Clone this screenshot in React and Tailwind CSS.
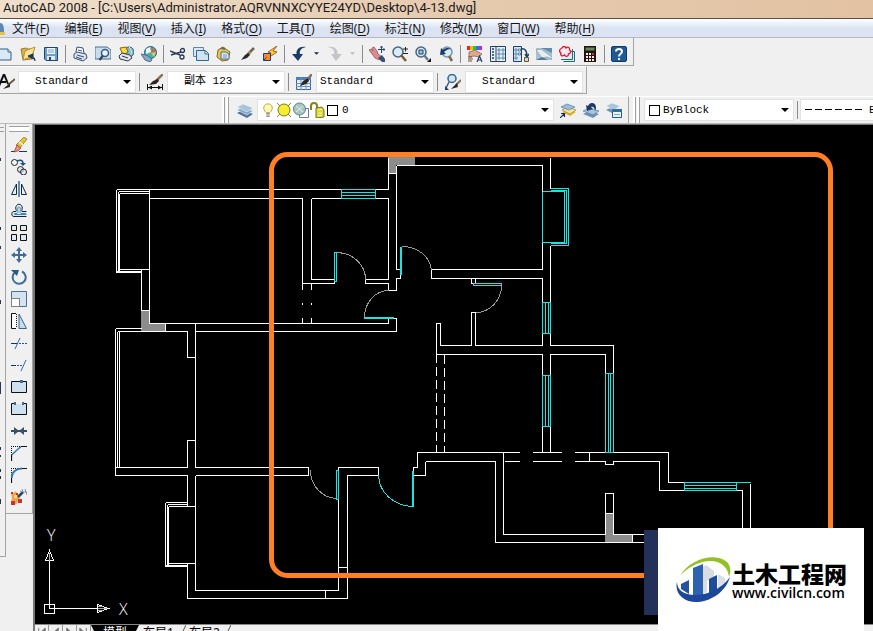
const ICONS = {
  blank: (
    <>
      <path d="M0 3h11l3 3v8H0z" fill="#d9e9f5" stroke="#2f5f8a" />
      <path d="M11 3v3h3" fill="#fff" stroke="#2f5f8a" />
    </>
  ),
  open: (
    <>
      <path d="M1 3l5-1 2 1h6l-2 10-9 1z" fill="#d9b04a" stroke="#8a6a18" strokeWidth=".8" />
      <path d="M5 5l10-4-3 9-9 4z" fill="#f8e59a" stroke="#a8842a" strokeWidth=".8" />
      <path d="M15 15c0-3-1-4-4-5M8 10l5-2v5z" fill="#1c3558" stroke="#1c3558" />
    </>
  ),
  save: (
    <>
      <path d="M1.500 1.500h13v13H3l-1.500-1.500z" fill="#6c9fcb" stroke="#1f4470" />
      <path d="M4 2h8v6H4z" fill="#eef5fb" />
      <path d="M5 4h6M5 6h6" stroke="#7da3c6" />
      <path d="M4 10h8v4H4z" fill="#dfe9f2" />
      <path d="M6 11h2v3H6z" fill="#1f4470" />
    </>
  ),
  print: (
    <>
      <path d="M4 6l1-5 6 1 1 5" fill="#fff" stroke="#37507a" />
      <path d="M2 8l3-2 9 2 1 4-4 3-9-3z" fill="#dfe3ee" stroke="#37507a" />
      <path d="M5 9l7 2M4 11l6 2M6 4l4 1" stroke="#37507a" />
    </>
  ),
  preview: (
    <>
      <path d="M0 1h12l4 3v9H0z" fill="#c9dced" stroke="#4a6f94" />
      <circle cx="10" cy="7" r="3.500" fill="#e8f6ff" stroke="#35597f" strokeWidth="1.500" />
      <path d="M8 9.500L4.500 14" stroke="#27456b" strokeWidth="2.200" />
    </>
  ),
  publish: (
    <>
      <circle cx="11" cy="6" r="5" fill="#7fb6cf" stroke="#32627c" />
      <path d="M11 1c3 3 3 7 0 10" fill="none" stroke="#e8f6e0" />
      <path d="M2 2l6-1 2 5-5 3z" fill="#f8d840" stroke="#8b6a10" />
      <path d="M1 10l3-3 8 2 2 3-4 3-8-2z" fill="#e2e5ea" stroke="#303a4c" />
      <path d="M4 10l6 2" stroke="#303a4c" />
    </>
  ),
  globe: (
    <>
      <circle cx="9.500" cy="6.500" r="6" fill="#3bb5b0" stroke="#2c5f80" />
      <path d="M5 3l4-2 1 5-5 2z" fill="#f4f4f4" />
      <path d="M10 1l5 4-4 2z" fill="#e25b4a" />
      <path d="M10 7l5-1-2 5z" fill="#f0c63c" />
      <path d="M0 8l5 1 4 2 2 3-2 2-5-2z" fill="#8ba7c0" stroke="#4f6d88" />
    </>
  ),
  cut: (
    <>
      <path d="M0 5l10 4M1 9l10-3" stroke="#2b3b55" strokeWidth="1.500" />
      <circle cx="12.500" cy="4.500" r="2" fill="none" stroke="#2b3b55" strokeWidth="1.300" />
      <circle cx="12" cy="11" r="2" fill="none" stroke="#2b3b55" strokeWidth="1.300" />
    </>
  ),
  copy: (
    <>
      <path d="M.5 1.500h10v9H.5z" fill="#dbe8f3" stroke="#5d87ab" />
      <path d="M3.500 4.500h9l3 3v7h-12z" fill="#cfe3f1" stroke="#31668f" />
      <path d="M12 5v3h3" fill="#fff" stroke="#31668f" />
    </>
  ),
  paste: (
    <>
      <path d="M2 4l5-3 7 5-2 8-6 1-5-4z" fill="#e8c84a" stroke="#80671a" />
      <path d="M5 6h5l3 2v5H5z" fill="#dbe8f3" stroke="#476f94" />
      <path d="M5 2l4 1" stroke="#6b6b6b" strokeWidth="2" />
      <path d="M7 9h4M7 11h4" stroke="#7396b4" />
    </>
  ),
  brush: (
    <>
      <path d="M15 2L9 8" stroke="#6f675b" strokeWidth="2.500" />
      <path d="M9 7L6 9l-4 5 6-2 3-3z" fill="#2c2522" />
      <path d="M10 6l2 2" stroke="#c7a23f" strokeWidth="1.500" />
    </>
  ),
  block: (
    <>
      <path d="M15 0L6 6l3 1-3 5 9-6-4-1z" fill="#ffd21f" stroke="#8f3b12" strokeWidth=".8" />
      <path d="M1.500 7.500h7v7h-7z" fill="#f58a2b" stroke="#1f3f74" />
      <path d="M1.500 14.500l3-3" stroke="#1f3f74" />
    </>
  ),
  undo: <path d="M15 1C8 0 5 4 5.500 8H1l6 7 5-7H9c-1-3 1-6 6-7z" fill="#1d3a66" />,
  redo: <path d="M1 1c7-1 10 3 9.500 7H15l-6 7-5-7h3c1-3-1-6-6-7z" fill="#c3c5c8" />,
  pan: (
    <>
      <path d="M0 4l2-1 2 2-1-3 2-1 3 4 1 3 4 3-3 3-4-2z" fill="#d98c8c" stroke="#8f5a66" strokeWidth=".8" />
      <path d="M9 12l4-3 3 4v3h-3z" fill="#3a4f75" />
      <path d="M12.500 0v7M9 3.500h7M11.500 1.500l1-1.500 1 1.500M14.500 2.500l1.500 1-1.500 1" stroke="#26436f" fill="none" />
    </>
  ),
  zoomRt: (
    <>
      <circle cx="6" cy="6" r="5" fill="#d7ecf7" stroke="#49657f" strokeWidth="1.500" />
      <path d="M9 9l5 6" stroke="#7a5c33" strokeWidth="2.500" />
      <path d="M11 3h5M13.500 1v4.500M11 7.500h5" stroke="#222" />
    </>
  ),
  zoomWin: (
    <>
      <circle cx="6" cy="6" r="5" fill="#d7ecf7" stroke="#49657f" strokeWidth="1.500" />
      <path d="M4 4h4v4H4z" fill="#9fc3dc" stroke="#1f3f66" />
      <path d="M9 9l4 5" stroke="#6b7b8c" strokeWidth="2.500" />
      <path d="M16 12v4h-4z" fill="#111" />
    </>
  ),
  zoomPrev: (
    <>
      <circle cx="9" cy="6" r="5" fill="#d7ecf7" stroke="#7c93a8" strokeWidth="1.500" />
      <path d="M13 3C9 1 7 2 5 4L3 2 2 9l6-1-2-2c2-2 4-3 7-3z" fill="#1d3a66" />
      <path d="M11 10l3 5" stroke="#7a6a50" strokeWidth="2.500" />
    </>
  ),
  props: (
    <>
      <path d="M0 0h3v4H0z" fill="#e22" />
      <path d="M3 0h3v4H3z" fill="#fb0" />
      <path d="M6 0h3v4H6z" fill="#2c3" />
      <path d="M9 0h3v4H9z" fill="#27e" />
      <path d="M12 0h3v4h-3z" fill="#c2d" />
      <path d="M2 6l6-2 7 4-3 3-5-1-5 1z" fill="#e3a58f" stroke="#8a5348" strokeWidth=".7" />
      <path d="M1 11h4M1 13h5M1 15h4" stroke="#6b4a3f" />
      <path d="M10 16l2.500-6 2.500 6M11 14h3" fill="none" stroke="#1f3f66" strokeWidth="1.200" />
    </>
  ),
  dcenter: (
    <>
      <path d="M.5.5h15v15H.5z" fill="#e8f1f8" stroke="#1f4066" />
      <path d="M6 1v14" stroke="#1f4066" />
      <path d="M2 3h2M2 6h2M2 9h2M2 12h2" stroke="#1f4066" strokeWidth="1.500" />
      <path d="M8 3h2v2H8zM12 3h2v2h-2zM8 7h2v2H8zM12 7h2v2h-2zM8 11h2v2H8zM12 11h2v2h-2z" fill="#fff" stroke="#3e6c97" strokeWidth=".8" />
    </>
  ),
  palettes: (
    <>
      <path d="M.5.5h8v15h-8z" fill="#d6e6f3" stroke="#1f4066" />
      <path d="M2 3h2v2H2zM5.500 3h2v2h-2zM2 7h2v2H2zM5.500 7h2v2h-2zM2 11h2v2H2z" fill="#fff" stroke="#3e6c97" strokeWidth=".8" />
      <path d="M8 3c4-1 6 2 6 7M12 8l2 3 2-3" fill="none" stroke="#1f4066" strokeWidth="1.500" />
      <path d="M11.500 11.500h4v4h-4z" fill="#e6d9a6" stroke="#555" />
    </>
  ),
  sheets: (
    <>
      <path d="M0 2h16v12H0z" fill="#a9c1ce" />
      <path d="M5 2h11v5z" fill="#5f8dab" />
      <path d="M0 4l5-1 11 8v2l-5-2-5 1z" fill="#e6edf0" stroke="#8ba1ae" strokeWidth=".8" />
      <path d="M0 14l6-3 6 3z" fill="#54799a" />
    </>
  ),
  markup: (
    <>
      <path d="M5.500 5.500h10v10h-11" fill="#dfe9ef" stroke="#1d6e72" />
      <path d="M13.500 3v10.500H2" fill="none" stroke="#1d6e72" />
      <path d="M3 2c1-2 3-2 4 0 2-2 4 0 3.500 2 2 1 1 4-1 4 0 3-3 3-4 1C3 11 1 9 2 7 0 6 0 3 3 2z" fill="#ffe9ee" stroke="#e0122f" strokeWidth="1.300" />
    </>
  ),
  calc: (
    <>
      <path d="M2 0h12v16H2z" fill="#24140f" />
      <path d="M3.500 1.500h9v3h-9z" fill="#5f8d5c" />
      <path d="M4 7h2v2H4zM7 7h2v2H7zM10 7h2v2h-2zM4 10h2v2H4zM7 10h2v2H7zM10 10h2v2h-2zM4 13h2v2H4zM7 13h2v2H7zM10 13h2v2h-2z" fill="#f5ecec" />
      <path d="M10 7h2v2h-2z" fill="#c63a3a" />
    </>
  ),
  help: (
    <>
      <rect x=".5" y=".5" width="15" height="15" rx="1.500" fill="#1f5a96" stroke="#123a66" />
      <path d="M5 5.500C5 2 11 2 11 5.500 11 8 8 7.500 8 10.500M8 12v2" fill="none" stroke="#fff" strokeWidth="2" />
    </>
  ),
  textStyle: (
    <>
      <path d="M0 12L5 0l4 10M2 8h5" fill="none" stroke="#111" strokeWidth="2" />
      <path d="M16 5L9 11" stroke="#6b5a44" strokeWidth="2" />
      <path d="M11 9l-7 6 7-2z" fill="#2c2522" />
    </>
  ),
  dimStyle: (
    <>
      <path d="M16 0L9 7" stroke="#807563" strokeWidth="2.500" />
      <path d="M11 5L6 7l-4 4 7-1 3-3z" fill="#2c2522" />
      <path d="M.5 10v6M15.500 10v6M1 13.500h14" stroke="#111" />
      <path d="M1 13.500l4-2v4zM15 13.500l-4-2v4z" fill="#111" />
    </>
  ),
  tableStyle: (
    <>
      <path d="M.5 3.500h14v12H.5z" fill="#e6f0fa" stroke="#3a6296" />
      <path d="M0 3h15v3H0z" fill="#4a7fc0" />
      <path d="M0 9.500h15M0 12.500h15M5 4v12M10 4v12" stroke="#6b93c4" />
      <path d="M16 0l-5 6" stroke="#807563" strokeWidth="2.500" />
      <path d="M12 4L7 7l-3 5 6-2 3-3z" fill="#2c2522" />
    </>
  ),
  leaderStyle: (
    <>
      <circle cx="7" cy="4.500" r="4" fill="#cfe6f7" stroke="#35618e" strokeWidth="1.500" />
      <path d="M4 8l-3 6" stroke="#35618e" strokeWidth="1.500" />
      <path d="M0 12v4h4z" fill="#1f3f66" />
      <path d="M16 6l-5 5" stroke="#807563" strokeWidth="2" />
      <path d="M12 9l-6 6 7-2z" fill="#2c2522" />
    </>
  ),
  layers: (
    <>
      <path d="M0 11l6-3 10 4-6 4z" fill="#4f7396" />
      <path d="M0 8l6-3 10 4-6 4z" fill="#86a8c6" stroke="#e9f1f8" strokeWidth=".6" />
      <path d="M0 5l6-3 10 4-6 4z" fill="#a8c3da" stroke="#e9f1f8" strokeWidth=".6" />
    </>
  ),
  bulb: (
    <>
      <path d="M6 11C1 7 3 1 8 1s7 6 2 10z" fill="#fff8b8" stroke="#b99a28" />
      <path d="M6 12.500h4M6 15h4" stroke="#777" strokeWidth="1.500" />
    </>
  ),
  sun: (
    <>
      <path d="M1 1l3 3M15 1l-3 3M1 15l3-3M15 15l-3-3" stroke="#8a8620" />
      <circle cx="8" cy="8" r="6" fill="#f5ee2e" stroke="#7b7a24" />
    </>
  ),
  vpFreeze: (
    <>
      <path d="M6.500 6.500h9v9h-9z" fill="#fff" stroke="#6a7f94" />
      <circle cx="6.500" cy="7" r="6" fill="#a9c6c2" stroke="#5f7f8c" />
      <path d="M3 4l7 6M10 4l-7 6" stroke="#dfeceb" />
    </>
  ),
  lock: (
    <>
      <path d="M1 8V4c0-4 6-4 6 0v3" fill="none" stroke="#84831c" strokeWidth="2" />
      <path d="M6 6l6-1 2 3v7l-8 1z" fill="#d8da3a" stroke="#73731a" />
      <path d="M8 8l4-.5M8 11h4M8 13.500h4" stroke="#f7f7a8" />
    </>
  ),
  layerCurrent: (
    <>
      <path d="M2 10l6-3 8 3-6 4z" fill="#e3b62c" />
      <path d="M2 8l6-3 8 3-6 4z" fill="#f7e59b" stroke="#8e7a2f" strokeWidth=".6" />
      <path d="M1 5l6-3 8 3-6 3z" fill="#9dbcd8" stroke="#48729b" strokeWidth=".6" />
      <path d="M0 16l4-4M1 11.500h3.500V15" fill="none" stroke="#16305b" strokeWidth="1.200" />
    </>
  ),
  layerPrev: (
    <>
      <path d="M0 12l6-3 10 3-6 4z" fill="#6e93b5" />
      <path d="M0 9l6-3 10 3-6 4z" fill="#a8c3da" stroke="#48729b" strokeWidth=".6" />
      <path d="M12 9c2-3 1-8-3-8-2 0-3 1-4 3L3 3l1 6 6-2-2-2c2-1 4 1 4 4z" fill="#1d3a66" />
    </>
  ),
  layerStates: (
    <>
      <path d="M0 8l6-3 8 3-6 4z" fill="#6e93b5" />
      <path d="M0 4l6-3 8 3-6 4z" fill="#a8c3da" stroke="#e9f1f8" strokeWidth=".6" />
      <path d="M6.500 7.500h9v8h-9z" fill="#eaf5fc" stroke="#1f5a8f" />
      <path d="M6 7h10v3H6z" fill="#2970ab" />
      <path d="M8 12.500h6" stroke="#7ea3c0" />
    </>
  ),
  erase: (
    <>
      <path d="M0 14.500h4M8 14.500h8" stroke="#1c3558" />
      <path d="M13 0l3 2-7 9-4-3z" fill="#e6c52f" stroke="#6f5c12" strokeWidth=".6" />
      <path d="M8 5l4 3" stroke="#eee" strokeWidth="1.500" />
      <path d="M6 8l4 3-3 3-4 1z" fill="#e98b80" stroke="#7c2e25" strokeWidth=".6" />
    </>
  ),
  copyObj: (
    <>
      <circle cx="3.500" cy="3.500" r="3" fill="#f4f7fa" stroke="#222" />
      <circle cx="9.500" cy="10.500" r="3" fill="#dfe7ee" stroke="#222" />
      <circle cx="12.500" cy="13" r="3" fill="#dfe7ee" stroke="#222" fillOpacity=".6" />
      <path d="M6 2c4-2 6 0 6 2" fill="none" stroke="#1f4f80" strokeWidth="1.500" />
      <path d="M9 4h6l-3 3z" fill="#1f4f80" />
    </>
  ),
  mirror: (
    <>
      <path d="M8 0v16" stroke="#2b6ca8" strokeWidth="1.500" />
      <path d="M5.500 3v10.500H.5zM10.500 3v10.500h5z" fill="#e7eef4" stroke="#1b2733" />
    </>
  ),
  offset: (
    <>
      <path d="M15.500 13.500H3c-3 0-3-5 0-5h2c1-1-1-3 0-5 1-3 5-3 6 0 1 2-1 4 0 5h4.500" fill="#e3ecf3" stroke="#17222e" />
      <path d="M15.500 11.500H4c-1 0-1-1 0-1h2c2-1 0-4 1-6 .5-1 1.500-1 2 0 1 2-1 5 1 6h5" fill="none" stroke="#3c86c8" />
    </>
  ),
  array: <path d="M.5.5h5v5h-5zM9.500.5h6v5h-6zM.5 9.500h5v6h-5zM9.500 9.500h6v6h-6z" fill="#dbe9f0" stroke="#111" />,
  move: <path d="M8 0l3 4H9v3h3V5l4 3-4 3V9H9v3h2l-3 4-3-4h2V9H4v2L0 8l4-3v2h3V4H5z" fill="#426b96" />,
  rotate: (
    <>
      <path d="M11 2.500a6.500 6.500 0 1 1-6.500.5" fill="none" stroke="#426b96" strokeWidth="2" />
      <path d="M0 1h8l-2 6z" fill="#2e5884" />
    </>
  ),
  scale: (
    <>
      <path d="M.5 6V.5h15v15H9z" fill="#d5e3f1" />
      <path d="M.5 7V.5h15v15H9" stroke="#44719b" />
      <path d="M.5 7.500h8v8h-8z" fill="#fff" stroke="#111" strokeDasharray="1 1" />
    </>
  ),
  stretch: (
    <>
      <path d="M5 .5H.5v15H5" fill="#fff" stroke="#111" />
      <path d="M5.500 1v14" stroke="#111" strokeDasharray="1 1" />
      <path d="M8 1l7.500 14.500H8z" fill="#c9daec" stroke="#3c6690" />
    </>
  ),
  trim: (
    <>
      <path d="M0 8.500h6" stroke="#17314f" />
      <path d="M8 8.500h8" stroke="#1f5a94" strokeDasharray="2 1" />
      <path d="M9 3L4 14" stroke="#2b6ca8" />
    </>
  ),
  extend: (
    <>
      <path d="M0 8.500h5" stroke="#17314f" />
      <path d="M6 8.500h6" stroke="#1f5a94" strokeDasharray="2 1" />
      <path d="M15 3l-5 11" stroke="#2b6ca8" />
    </>
  ),
  breakPt: (
    <>
      <path d="M.5 2.500h15v11H.5z" fill="#cfe0ee" stroke="#111" />
      <path d="M9 1h3v3H9z" fill="#426b96" />
    </>
  ),
  breakObj: (
    <>
      <path d="M1 3h14v10H1z" fill="#cfe0ee" />
      <path d="M3 2.500H.5v11h15v-11H13" fill="none" stroke="#111" />
      <path d="M3 1h2v3H3zM11 1h2v3h-2z" fill="#426b96" />
    </>
  ),
  join: (
    <>
      <path d="M0 8h16" stroke="#111" strokeWidth="1.500" />
      <path d="M3 4l5 4-5 4zM13 4L8 8l5 4z" fill="#35536f" />
    </>
  ),
  chamfer: (
    <>
      <path d="M10 1.500h6M.5 10v6" stroke="#111" strokeWidth="1.200" />
      <path d="M0 1.500h10M.5 1v9" stroke="#111" strokeDasharray="1 1" />
      <path d="M.5 10L10 1.500" stroke="#3577b5" strokeWidth="1.500" />
    </>
  ),
  fillet: (
    <>
      <path d="M10 1.500h6M.5 10v6" stroke="#111" strokeWidth="1.200" />
      <path d="M0 1.500h10M.5 1v9" stroke="#111" strokeDasharray="1 1" />
      <path d="M.5 11C1 5 5 1.500 11 1.500" fill="none" stroke="#3577b5" strokeWidth="2" />
    </>
  ),
  explode: (
    <>
      <path d="M0 3l3 1 2-2 1 3 4 1-2 3 3 4-4-1-2 4-2-3-3 1 1-5z" fill="#f0a050" />
      <path d="M3 6h3v3H3z" fill="#f9e04a" />
      <path d="M0 12h4v4H0zM7 10h4v4H7zM0 3h2v2H0zM5 4h2v2H5z" fill="#c0392b" />
      <path d="M7 8l5-5" stroke="#2d4468" strokeWidth="2.500" />
      <path d="M11 0l1 3h4M14 0l2 6M9 2l2 1" stroke="#7d97b3" fill="none" />
    </>
  ),
};

// '|' is a separator, 'v' a small drop-down arrow
const STANDARD = [
  ['blank', '新建'], ['open', '打开'], ['save', '保存'], '|',
  ['print', '打印'], ['preview', '打印预览'], ['publish', '发布'], ['globe', '三维 DWF'], '|',
  ['cut', '剪切'], ['copy', '复制'], ['paste', '粘贴'], ['brush', '特性匹配'], ['block', '块编辑器'], '|',
  ['undo', '放弃'], 'v', ['redo', '重做'], 'v', '|',
  ['pan', '实时平移'], ['zoomRt', '实时缩放'], ['zoomWin', '窗口缩放'], ['zoomPrev', '缩放上一个'], '|',
  ['props', '特性'], ['dcenter', '设计中心'], ['palettes', '工具选项板'], ['sheets', '图纸集管理器'], ['markup', '标记集管理器'], ['calc', '快速计算器'], '|',
  ['help', '帮助'],
];

const MODIFY = [
  ['erase', '删除'], ['copyObj', '复制对象'], ['mirror', '镜像'], ['offset', '偏移'], ['array', '阵列'],
  ['move', '移动'], ['rotate', '旋转'], ['scale', '缩放'], ['stretch', '拉伸'], ['trim', '修剪'],
  ['extend', '延伸'], ['breakPt', '打断于点'], ['breakObj', '打断'], ['join', '合并'],
  ['chamfer', '倒角'], ['fillet', '圆角'], ['explode', '分解'],
];

const MENUS = [
  ['文件', 'F'], ['编辑', 'E'], ['视图', 'V'], ['插入', 'I'], ['格式', 'O'], ['工具', 'T'],
  ['绘图', 'D'], ['标注', 'N'], ['修改', 'M'], ['窗口', 'W'], ['帮助', 'H'],
];

function Icon({ name, className = 'size-4' }) {
  return (
    <svg viewBox="0 0 16 16" fill="none" className={`${className} shrink-0`} aria-hidden="true">
      {ICONS[name]}
    </svg>
  );
}

function Tool({ name, label, className = 'h-[22px] w-[23px]' }) {
  return (
    <button type="button" aria-label={label} className={`${className} flex shrink-0 items-center justify-center`}>
      <Icon name={name} />
    </button>
  );
}

function Separator() {
  return (
    <div className="flex w-[6px] shrink-0 justify-center">
      <div className="h-[18px] w-px bg-[#8c8c8c]" />
    </div>
  );
}

function Caret({ className = 'h-1 w-2' }) {
  return (
    <svg viewBox="0 0 8 4" className={className} aria-hidden="true">
      <path d="M0 0h8L4 4z" fill="currentColor" />
    </svg>
  );
}

function Grip() {
  return (
    <div className="flex shrink-0 gap-px self-stretch">
      <div className="w-[3px] border-r border-[#a0a0a0] bg-white" />
      <div className="w-[3px] border-r border-[#a0a0a0] bg-white" />
    </div>
  );
}

function Combo({ label, value, before, className, pad = 'pl-1' }) {
  return (
    <div className={`${className} relative flex h-[22px] shrink-0 items-center border border-[#e2e2e2] bg-white`}>
      {before}
      <select
        aria-label={label}
        defaultValue={value}
        className={`${pad} h-full w-full min-w-0 flex-1 appearance-none bg-transparent font-['Liberation_Mono','Noto_Sans_CJK_SC',monospace] text-[11px] text-black outline-none`}
      >
        <option>{value}</option>
      </select>
      <Caret className="pointer-events-none absolute right-1 h-1 w-2" />
    </div>
  );
}

function Header() {
  return (
    <header>
      <h1 className="h-[18px] overflow-hidden bg-linear-to-r from-[#f0dfcc] via-[#e6cbb0] to-[#e2c2a2] pl-[3px] font-['Roboto',sans-serif] text-[13px] leading-[16px] whitespace-nowrap text-[#1a1a1a]">
        AutoCAD 2008 - [C:\Users\Administrator.AQRVNNXCYYE24YD\Desktop\4-13.dwg]
      </h1>
      <nav className="flex h-5 items-center gap-[15px] border-t border-b border-t-[#5c4f45] border-b-[#b4b8c4] bg-linear-to-b from-white via-[#dbe4f2] to-[#dde2f3] pt-px text-[12px] text-[#151515]">
        <svg viewBox="0 0 5 14" className="-mr-2 h-3.5 w-[5px]" aria-hidden="true">
          <path d="M0 1c3 0 4 3 4 9H0z" fill="#5c86b5" />
          <path d="M0 10h5v3H0z" fill="#e8c437" />
        </svg>
        {MENUS.map(([name, key]) => (
          <button type="button" key={key} className="shrink-0 whitespace-nowrap">
            {name}(<u className="underline-offset-2">{key}</u>)
          </button>
        ))}
      </nav>
    </header>
  );
}

function Toolbars() {
  return (
    <div>
      <div className="flex h-7 w-fit items-center border-r border-b border-[#a5a5a5] pt-[5px] pr-[3px]">
        <div className="-ml-[7px] flex items-center">
          {STANDARD.map((item, i) => {
            if (item === '|') return <Separator key={i} />;
            if (item === 'v') {
              return (
                <button type="button" key={i} aria-label="更多" className="flex h-[22px] w-[13px] items-center justify-center pb-px text-[#1c2a55] nth-[19]:text-[#bbb]">
                  <Caret className="h-[3px] w-[5px]" />
                </button>
              );
            }
            return <Tool key={i} name={item[0]} label={item[1]} />;
          })}
        </div>
      </div>

      <div className="flex h-7 w-fit items-center border-t border-r border-b border-t-white border-r-[#a5a5a5] border-b-[#a5a5a5] pt-[3px] pr-[3px]">
        <Tool name="textStyle" label="文字样式" className="-ml-1 h-[22px] w-[22px]" />
        <Combo label="文字样式" value="Standard" className="w-[118px]" pad="pl-4" />
        <Separator />
        <Tool name="dimStyle" label="标注样式" className="h-[22px] w-[25px]" />
        <Combo label="标注样式" value="副本 123" className="w-[118px]" pad="pl-4" />
        <Separator />
        <Tool name="tableStyle" label="表格样式" className="h-[22px] w-[25px]" />
        <Combo label="表格样式" value="Standard" className="w-[118px]" pad="pl-[3px]" />
        <Separator />
        <Tool name="leaderStyle" label="多重引线样式" className="h-[22px] w-[25px]" />
        <Combo label="多重引线样式" value="Standard" className="w-[118px]" pad="pl-4" />
      </div>

      <div className="flex h-[30px] items-end overflow-hidden border-b border-[#b8b8b8]">
        <div className="ml-[222px] flex h-[27px] shrink-0 items-center border-t border-r border-t-white border-r-[#a5a5a5] pr-[3px]">
          <Grip />
          <Tool name="layers" label="图层特性管理器" className="ml-1 h-[22px] w-6" />
          <Combo
            label="图层"
            value="0"
            className="w-[297px]"
            pad="pl-1"
            before={
              <div className="flex items-center gap-px pl-[3px]">
                <Icon name="bulb" className="size-3.5" />
                <Icon name="sun" className="size-4" />
                <Icon name="vpFreeze" className="size-4" />
                <Icon name="lock" className="size-4" />
                <span className="size-[11px] border border-black bg-white" />
              </div>
            }
          />
          <Tool name="layerCurrent" label="置为当前" className="ml-0.5 h-[22px] w-[23px]" />
          <Tool name="layerPrev" label="上一个图层" />
          <Tool name="layerStates" label="图层状态管理器" />
        </div>
        <div className="ml-1 flex h-[27px] shrink-0 items-center border-t border-white">
          <Grip />
          <Combo
            label="颜色"
            value="ByBlock"
            className="ml-1 w-[150px]"
            pad="pl-[3px]"
            before={<span className="ml-1 size-[11px] shrink-0 border border-black bg-white" />}
          />
          <Separator />
          <Combo
            label="线型"
            value="ByBlock"
            className="w-[150px]"
            pad="pl-1.5"
            before={
              <svg viewBox="0 0 58 2" className="ml-1 h-0.5 w-[58px] shrink-0" aria-hidden="true">
                <path d="M0 .5h58" stroke="#000" strokeDasharray="7 3" />
              </svg>
            }
          />
        </div>
      </div>
    </div>
  );
}

const WALLS = [
  // upper left bay and room
  'M116 189H388M118 191H149M119 193H149M116 189V272M118 191V271M119 193V270M119 269H149M116 271H141M116 272H141M141 269V310',
  'M149 189V323M149 198H302M311 198H388M302 198V283M311 198V279M311 279H334V283H302M141 310H149M149 323H388M165 323V331',
  'M302 283V289M311 283V289M302 302V304M311 302V304M302 317V323M311 317V323',
  // middle hall
  'M365 279H388M365 279V283H388V290H396V278H400V269H396V165M388 157V189M388 198V279M388 173H396M388 323V318H396V331H195',
  // living room and lower left balcony
  'M187 357H195V467M195 323V357M187 331V357M187 467V440H195M115 328H141M117 331H187M115 328V475M117 331V467M119 331V467',
  'M115 467H187M115 475H187M195 467H308V475H195M187 475V502M187 506H195M195 475V590H338V467H378V475H347V598H187V563',
  'M165 502H187V506M167 504H187M168 506H195M165 502V566M167 504V565M168 506V564M168 563H195M165 565H187M165 566H187M338 567H347M325 590V598',
  // top right room
  'M396 165H542V191M550 157V188M542 242V269H431V278H542V345H475V312H471V345H440V323H436V354H542V452M550 245V345H613V373M605 373V354H550V452',
  'M471 278V283H475V278',
  // lower right rooms
  'M412 467H417V452H519M425 461V475H413V467M425 461H495V542H658M503 452V534H605V493H613V534H658M504 461H519M532 452H561M532 461H561',
  'M574 452H668V482H684M574 461H605V464H613V461H659V490H684M589 452V461M605 513H613M632 534V542M736 490H742V530M750 483V530',
];

const CYAN = [
  'M341 189H375V198H341zM341 192H375M341 195H375',
  'M334 252H336V281H334zM400 246V274M401 246V274M364 317H393V318H364z',
  'M542 191V242M542 191H564V242H542M550 190H566V243H550M550 188H568V245H550',
  'M473 283H501V285H473zM542 302H550V333H542zM545 302V333M548 302V333',
  'M542 375H550V426H542zM545 375V426M548 375V426M605 373H613V452H605zM608 373V452M610 373V452',
  'M336 470H338V499H336zM412 470V506M413 470V506M378 475A35 32 0 0 0 412 506',
  'M684 482H736V490H684zM684 485H736M684 488H736M736 482H750',
];

function FloorPlan() {
  return (
    <svg viewBox="35 125 838 499" preserveAspectRatio="xMinYMin meet" className="absolute inset-0 size-full" role="img" aria-label="4-13.dwg">
      <path d="M388 156h27v9h-19v9h-8zM141 310h9v13h16v9h-25zM605 513h9v21h18v9h-27z" fill="#8c8c8c" />
      <g transform="translate(.5 .5)" fill="none" shapeRendering="crispEdges">
        <path d={WALLS.join('')} stroke="#fff" />
        <path d="M436 353V452M444 354V452" stroke="#fff" strokeDasharray="9 4" />
        <path d={CYAN.join('')} stroke="#1ee3e3" />
        <path
          d="M336 252A29 27 0 0 1 365 279M402 246A29 26 0 0 1 431 270M388 290A24 27 0 0 0 364 317M501 285A26 27 0 0 1 475 312M310 470A27 28 0 0 0 336 498"
          stroke="#9a9a9a"
        />
        <path d="M44 604H54V613H44zM49 608V560M49 608H97M49 550L45 560H53zM108 608L97 604V612z" stroke="#fff" />
        <path d="M49 552V560M97 608H106M97 606H102M97 610H102" stroke="#aaa" />
      </g>
      <text x="47" y="541" fill="#fff" className="font-['Open_Sans',sans-serif] text-[16px] font-light">Y</text>
      <text x="119" y="615" fill="#fff" className="font-['Open_Sans',sans-serif] text-[16px] font-light">X</text>
      <rect x="271.500" y="154.500" width="559" height="421" rx="16" fill="none" stroke="#ff7f27" strokeWidth="5" />
    </svg>
  );
}

function LayoutTabs() {
  return (
    <div className="flex h-[7px] items-start overflow-hidden border-t border-[#888] bg-[#f0f0f0] text-[12px] leading-4 text-black">
      {['M4 1v10M11 1L6 6l5 5z', 'M10 1L5 6l5 5z', 'M4 1l5 5-5 5z', 'M3 1l5 5-5 5zM10 1v10'].map(d => (
        <button type="button" key={d} aria-label="滚动布局" className="h-4 w-[14px] shrink-0 border-r border-[#999]">
          <svg viewBox="0 0 14 14" className="size-[13px]" fill="#777" stroke="#777"><path d={d} /></svg>
        </button>
      ))}
      <button type="button" className="h-4 shrink-0 bg-black px-3 text-white [clip-path:polygon(0_0,100%_0,calc(100%-8px)_100%,8px_100%)]">模型</button>
      <button type="button" className="shrink-0 px-1">布局1</button>
      <svg viewBox="0 0 8 16" className="h-4 w-2 shrink-0" aria-hidden="true"><path d="M8 0L0 16" stroke="#555" /></svg>
      <button type="button" className="shrink-0 px-[3px]">布局2</button>
      <svg viewBox="0 0 8 16" className="h-4 w-2 shrink-0" aria-hidden="true"><path d="M8 0L0 16" stroke="#555" /></svg>
    </div>
  );
}

function Watermark() {
  return (
    <div className="absolute right-[9px] bottom-0 flex items-start">
      <div className="mt-0.5 h-[85px] w-[14px] bg-[#22305a]" />
      <div className="flex h-[103px] w-[206px] items-center bg-white pl-[18px]">
        <svg viewBox="0 0 56 46" className="h-[46px] w-14 shrink-0" aria-hidden="true">
          <path d="M27 10l3-2 8 6v6l-7 4v11l-4 2z" fill="#d9dce0" />
          <path d="M42 17l7 4v8l-7 6z" fill="#dcdfe3" />
          <path d="M5 27l8-4v14l-8-5z" fill="#2454a0" />
          <path d="M17 11l10-4v31l-10 1z" fill="#2c62b0" />
          <path d="M33 22l8-4v17l-8 3z" fill="#1f4c99" />
          <path d="M4 19C12 5 30-2 43 1c9 2 14 9 10 19C52 9 43 3 33 4 21 5 11 11 4 19z" fill="#94c122" />
          <path d="M1 25c0 8 7 13 18 13 14 0 27-7 35-18-4 14-18 24-32 25C9 46-2 37 1 25z" fill="#1d479a" />
        </svg>
        <div className="mt-0.5 text-black">
          <p className="font-['Noto_Sans_CJK_SC',sans-serif] text-[23px] leading-6 font-black whitespace-nowrap">土木工程网</p>
          <p className="font-['Open_Sans',sans-serif] text-[14px] leading-4 font-semibold">www.civilcn.com</p>
        </div>
      </div>
    </div>
  );
}

export default function App() {
  return (
    <div className="relative flex h-screen flex-col overflow-hidden bg-[#f0f0f0] font-['Noto_Sans','Noto_Sans_CJK_SC',sans-serif]">
      <Header />
      <Toolbars />
      <div className="flex min-h-0 flex-1">
        <aside className="mb-[74px] w-[6px] shrink-0 border-r border-b border-[#a5a5a5]">
          <svg viewBox="0 0 5 432" className="h-[432px] w-[5px]" fill="#26364d" aria-hidden="true">
            <path d="M0 3h4v1H0zM0 7h4v1H0z" fill="#a0a0a0" />
            <path d="M0 34h1v3H0zM0 103h1v3H0zM0 122h1v3H0zM0 176h1v4H0zM0 258h1v12H0zM0 323h1v3H0zM0 331h1v2H0zM0 345h1v3H0zM0 352h1v3H0zM0 375h1v5H0z" />
          </svg>
        </aside>
        <aside className="flex w-[27px] shrink-0 flex-col items-center self-start border-r border-b border-[#a5a5a5] pb-[5px]">
          <div className="my-0.5 h-[6px] w-5 border-y border-[#a0a0a0] bg-white" />
          {MODIFY.map(([name, label]) => (
            <Tool key={name} name={name} label={label} className="h-[22px] w-6" />
          ))}
        </aside>
        <div className="flex min-w-0 flex-1 flex-col border-t border-l-2 border-[#777]">
          <main className="relative min-h-0 flex-1 overflow-hidden bg-black">
            <FloorPlan />
          </main>
          <LayoutTabs />
        </div>
      </div>
      <Watermark />
    </div>
  );
}
